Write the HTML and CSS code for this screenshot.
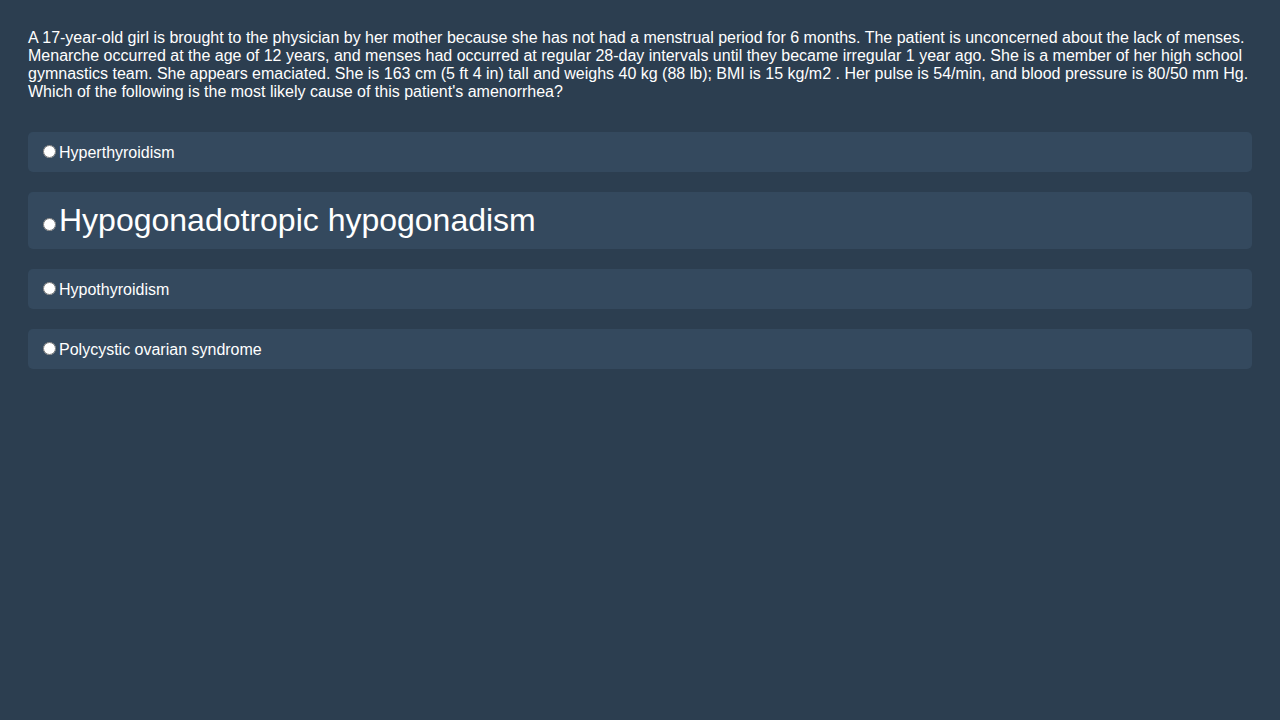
FILE: index.html
```html
<!DOCTYPE html>
<html>
<head>
<meta charset="utf-8">
<link rel="stylesheet" href="styles.css">
</head>
<body>
<div class="quiz">
  <p class="question">A 17-year-old girl is brought to the physician by her mother because she has not had a menstrual period for 6 months. The patient is unconcerned about the lack of menses. Menarche occurred at the age of 12 years, and menses had occurred at regular 28-day intervals until they became irregular 1 year ago. She is a member of her high school gymnastics team. She appears emaciated. She is 163 cm (5 ft 4 in) tall and weighs 40 kg (88 lb); BMI is 15 kg/m2 . Her pulse is 54/min, and blood pressure is 80/50 mm Hg. Which of the following is the most likely cause of this patient's amenorrhea?</p>
  <div class="options">
    <label class="option"><input type="radio" name="a">Hyperthyroidism</label>
    <label class="option option-big"><input type="radio" name="a">Hypogonadotropic hypogonadism</label>
    <label class="option"><input type="radio" name="a">Hypothyroidism</label>
    <label class="option"><input type="radio" name="a">Polycystic ovarian syndrome</label>
  </div>
</div>
</body>
</html>
```
FILE: styles.css
```css
html, body {
  margin: 0;
  background: #2c3e50;
}
body {
  font-family: "Liberation Sans", Arial, sans-serif;
  font-size: 16px;
  color: #ffffff;
}
.quiz {
  padding: 29px 28px 28px;
}
.question {
  margin: 0 0 31px 0;
}
.options {
  display: flex;
  flex-direction: column;
  gap: 20px;
}
.option {
  display: block;
  background: #34495e;
  border-radius: 5px;
  padding: 10px;
}
.option-big {
  font-size: 32px;
}
```
